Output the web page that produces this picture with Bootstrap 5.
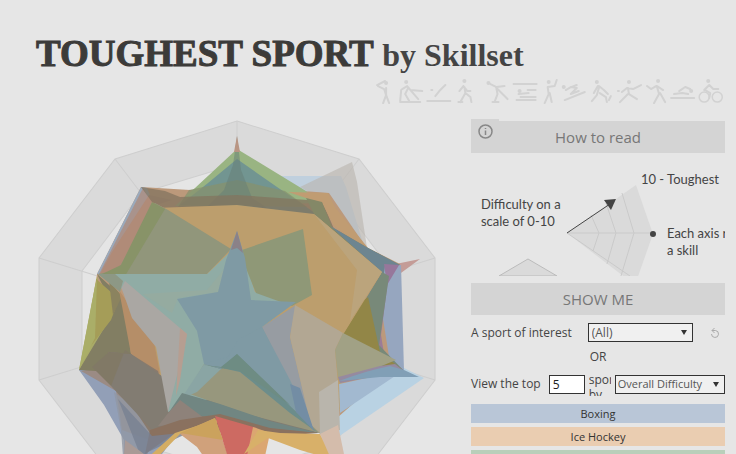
<!DOCTYPE html>
<html lang="en">
<head>
<meta charset="utf-8">
<meta name="viewport" content="width=device-width, initial-scale=1">
<title>Toughest Sport by Skillset</title>
<link href="https://cdn.jsdelivr.net/npm/bootstrap@5.3.0/dist/css/bootstrap.min.css" rel="stylesheet">
<style>
body{background:#e6e6e6;color:#444;font-family:"Open Sans","Noto Sans",sans-serif;font-size:12px;line-height:18px}
.page-head{padding:32px 11px 6px 36px}
.title{font-family:"Liberation Serif",serif;color:#3c3b39;font-size:37px;line-height:43px;font-weight:700;white-space:nowrap}
.title .stencil{-webkit-text-stroke:1px #3c3b39}
.title small{font-size:32px;font-weight:700;color:#444}
.sports{display:block;width:51%;height:auto}
.chart-col{flex:0 0 64%}
.side{padding:11px 11px 0 0;min-width:0}
.bar-title{background:#d4d4d4;color:#777;font-size:15px;font-weight:400;line-height:32px}
.info{top:-2px;left:0;width:28px;height:24px;background:#d4d4d4;border:0}
.guide{display:block;width:100%;height:auto;margin-bottom:7px}
.guide text{font-family:Lato,"Open Sans",sans-serif;font-size:13px;fill:#444}
.field{border:1px solid #333;background:#f0f0f0;color:#555;border-radius:0;height:19px;padding:0 3px;line-height:16px;min-width:0;appearance:none}
select.field{background-image:url("data:image/svg+xml,%3Csvg xmlns='http://www.w3.org/2000/svg' viewBox='0 0 6 5'%3E%3Cpath d='M0 0h6L3 5z' fill='%23333'/%3E%3C/svg%3E");background-repeat:no-repeat;background-size:6px 5px;background-position:right 5px center;font-size:12px}
select.metric{font-size:11px;padding:0 2px}
.num{width:36px;background:#fff;color:#222}
.either{margin:6px 0}
.cut{width:22px;height:24px;line-height:15px;overflow:hidden}
.pick{border:0;height:19px;line-height:19px;font-size:11px;color:#333;padding:0}
.c1{background:#b9c6d7}.c2{background:#eacdb1}.c3{background:#b9cfba}
</style>
</head>
<body>
<div class="vh-100 overflow-hidden">
<header class="page-head">
  <h1 class="title m-0"><span class="stencil">TOUGHEST SPORT</span> <small>by Skillset</small></h1>
  <svg class="sports ms-auto" viewBox="376 77 350 27" fill="none" stroke="#d2d2d2" stroke-width="2" stroke-linecap="round" stroke-linejoin="round" aria-hidden="true">
    <path d="M379 85l8-4M380 86l6 3 2 6-3 8M388 88v7l3 8"/><circle cx="388" cy="83" r="1" />
    <path d="M404 89l5-3 5 6 6 7M410 88l-3 6 4 7M402 102h20M403 90l-1 11M412 90l12 1"/><circle cx="408" cy="82" r="1"/>
    <path d="M429 101h23M437 96l4-5 6-6M433 90h1"/>
    <path d="M465 86l-4 5M465 86l4 5h3M466 87l1 6-5 9M467 93l5 4 1 5M460 102h4"/><circle cx="466" cy="81" r="1"/>
    <path d="M492 84l6 3 8-1M497 87l8 8 4 4M498 89l1 5-3 8M494 102h6"/><circle cx="490" cy="83" r="1"/>
    <path d="M515 84h23M518 100h19M520 94l10-1M522 97h15M529 90h8"/><circle cx="521" cy="91" r="1"/>
    <path d="M549 87l7-1 2-6M549 87l1 7-4 9M551 93l2 9"/><circle cx="550" cy="82" r="1"/>
    <path d="M567 90l5-3 6 1-6 6 8-3M566 100l20-8M578 85l-5 2"/><circle cx="565" cy="87" r="1"/>
    <path d="M599 86l-4 7M600 86l5 4 4 4M600 88l-2 7-5 6M601 93l6 4 1 5M612 96l-2 4"/><circle cx="598" cy="82" r="1"/>
    <path d="M623 92l5-4 6 1 8-4M629 88l1 6 8 5M629 94l-8 8M619 91h1"/><circle cx="630" cy="82" r="1"/>
    <path d="M657 86l-5 3-4-3M658 86l6 4M658 87l2 7-5 9M661 93l5 9"/><circle cx="659" cy="81" r="1"/>
    <path d="M672 98h23M675 94l8-1 6 1M680 91l6-4 5 2"/><circle cx="692" cy="91" r="1"/>
    <circle cx="705" cy="97" r="5" stroke-width="1.5"/><circle cx="718" cy="97" r="5" stroke-width="1.5"/><path d="M705 90l5-5 4 4h5M706 90l5 3-1 5"/><circle cx="709" cy="81" r="1"/>
  </svg>
</header>
<main class="d-flex align-items-start">
  <div class="chart-col">
  <svg class="d-block w-100" viewBox="0 110 471 414" role="img" aria-label="Radar chart of sports by skill">
    <path d="M237 121L359 159 435 258V380L359 479 237 517 115 479 39 380V258L115 159Z" fill="#dadada" stroke="#cecece"/>
    <path d="M237 164L333 193 392 271V367L333 445 237 474 141 445 82 367V271L141 193Z" fill="#e5e5e5" stroke="#cfcfcf"/>
    <path d="M237 121V319M359 159L237 319M435 258L237 319M435 380L237 319M39 380L237 319M39 258L237 319M115 159L237 319" stroke="#cecece" fill="none"/>
    <!-- outermost shapes -->
    <path d="M270 176H341L346 187 368 260 350 270 300 220Z" fill="#c0d0de"/>
    <path d="M300 187L352 162 357 182 367 248 340 210Z" fill="#b9b4ae" opacity=".6"/>
    <path d="M386 266L420 259 390 281Z" fill="#c49c97"/>
    <path d="M404 368L424 378 335 439 320 430 330 380Z" fill="#b9d2e3"/>
    <path d="M97 274L84 350 96 360 130 290Z" fill="#dfb995"/>
    <path d="M97 276L79 370 110 390 130 300Z" fill="#a9ab68"/>
    <path d="M79 370L104 405 124 440 124 470H150L180 430 160 370Z" fill="#929fb7"/>
    <path d="M81 371L116 391 122 430 150 440 170 400 140 360Z" fill="#9b8b84"/>
    <path d="M114 392L138 410 152 436 144 470H124L121 430Z" fill="#9197a4" opacity=".8"/>
    <!-- body -->
    <path d="M141 187L190 190 237 188 290 190 329 193 366 247 400 264 398 364 320 433 170 432 110 370 97 274Z" fill="#bc997b"/>
    <path d="M141 187L97 274H103L152 200 147 188Z" fill="#9aaabd"/>
    <path d="M143 188L152 203 126 258 103 274H99Z" fill="#a9938c"/>
    <path d="M149 195L172 200 153 206 118 274H100L112 252Z" fill="#b08b78"/>
    <path d="M237 149L306 191 316 203 237 206 175 206 195 188Z" fill="#99b482"/>
    <path d="M237 159L277 187 321 217 237 208 180 205 208 183Z" fill="#729591"/>
    <path d="M189 190L237 180 285 191 307 207 237 206 178 207Z" fill="#87926e" opacity=".75"/>
    <path d="M237 136L241 170 252 198 270 210H204L224 190 233 165Z" fill="#667e76" opacity=".5"/>
    <path d="M237 136L240 152H234Z" fill="#b99583"/>
    <path d="M141 187L165 191 180 197 237 195 322 201 334 229 314 215 237 205 168 210 152 202Z" fill="#83745f" opacity=".75"/>
    <path d="M288 192L328 193 335 207 368 248 353 240 334 226 322 203 306 198Z" fill="#c09c72"/>
    <path d="M306 198L322 202 332 227 368 248 400 265 382 273 314 214Z" fill="#848867"/>
    <path d="M330 226L368 248 400 265 386 280 375 266Z" fill="#6d8590"/>
    <path d="M385 266L401 265 404 372 390 363 380 300Z" fill="#96a6bf"/>
    <path d="M384 264L399 265 387 285Z" fill="#97779b"/>
    <path d="M388 280L381 335 384 354 404 372 378 363 375 330Z" fill="#9b7c98"/>
    <path d="M382 272L389 276 379 345 404 371 365 365 345 333Z" fill="#788979"/>
    <path d="M364 300L368 297 380 352 404 371 373 363 343 334Z" fill="#928647"/>
    <!-- central fills -->
    <path d="M155 208L237 205 314 214 382 272 344 333 340 410 320 430 170 412 121 280Z" fill="#bc9e6d"/>
    <path d="M314 214L382 272 362 303 350 321 357 270Z" fill="#bba47c"/>
    <path d="M155 203L168 210 231 249 207 274 98 274 118 270Z" fill="#91967b"/>
    <path d="M152 202L165 209 125 276 100 275 121 265Z" fill="#889368"/>
    <path d="M97 274L120 295 125 303 131 354 150 372 112 372 79 370 115 310Z" fill="#827e63"/>
    <path d="M96 279L119 299 111 320 87 351 95 310Z" fill="#a59d58"/>
    <path d="M95 286L97 279 95 338 79 370Z" fill="#aaae68"/>
    <path d="M109 281L122 296 113 315Z" fill="#8b835f"/>
    <path d="M119 290L154 342 160 374 131 354Z" fill="#b58e68"/>
    <path d="M131 354L158 371 169 412 187 393 250 410 320 433 230 430 152 436 109 371 108 352Z" fill="#897b6e"/>
    <path d="M131 354L187 394 250 412 320 433 220 414 152 430 111 386 110 352Z" fill="#827c72"/>
    <path d="M109 352L131 354 125 350 111 386 92 367Z" fill="#817966"/>
    <path d="M116 274L126 280 187 333 184 370 176 400 168 412 156 347 132 318 124 295Z" fill="#aaa7a3"/>
    <path d="M98 274H207L231 251 237 250 245 260 255 292 295 302 262 327 312 428 230 392 168 412 187 334 125 281 120 291Z" fill="#90aca5"/>
    <path d="M180 328L187 334 180 380 176 396Z" fill="#b69e91"/>
    <path d="M98 274H115L123 281 120 292Z" fill="#8d9885"/>
    <path d="M178 298L219 292 225 268 207 290 143 294 172 313Z" fill="#95aba0"/>
    <path d="M239 251L303 229 312 295 292 306 256 293Z" fill="#8f9877"/>
    <path d="M262 327L296 305 290 337 312 428Z" fill="#979ca2"/>
    <path d="M295 305L343 333 335 350 338 384 323 435 312 430 290 337Z" fill="#b2a793"/>
    <path d="M319 392L338 380 340 430 320 435Z" fill="#b9b5ac"/>
    <path d="M343 333L396 360 379 367 338 377 335 350Z" fill="#a1a185"/>
    <path d="M338 377L380 366 395 364 404 371 340 383Z" fill="#958aa0"/>
    <path d="M339 384L404 370 340 413Z" fill="#a2b9d0"/>
    <path d="M339 381Q365 371 390 366L404 370 419 377 380 377 350 380Z" fill="#819fb6"/>
    <!-- lower centre -->
    <path d="M187 393L204 364 237 366 300 415 320 433 250 415Z" fill="#97977d"/>
    <path d="M181 399L204 364 221 369 197 392Z" fill="#8aa5a4"/>
    <path d="M169 412L182 393 220 404 270 421 318 433 250 427 210 417Z" fill="#718682"/>
    <path d="M169 412L180 400 204 418 180 425 158 426Z" fill="#8e827a"/>
    <path d="M150 430L180 420 220 414 270 428 318 433 280 436 215 427 175 433 145 454Z" fill="#8a715f"/>
    <path d="M118 399L152 436 190 432 148 452 143 462Z" fill="#788192" opacity=".8"/>
    <path d="M237 231L226 260 218 292 177 299 197 331 204 364 221 369 238 354 312 428 262 327 296 302 251 300 245 258Z" fill="#7f9aa4"/>
    <path d="M237 231L231 250 237 248 243 253Z" fill="#8b8188"/>
    <path d="M237 354L318 433 290 413 240 372 204 364 221 369Z" fill="#6c8d8b"/>
    <path d="M262 327L290 380 313 428 237 354 204 364 221 369 238 340Z" fill="#7f9aa4"/>
    <path d="M237 354L290 405 240 371 204 365 221 367Z" fill="#6e8c83"/>
    <path d="M290 384L300 388 314 431 296 412Z" fill="#738da4"/>
    <path d="M143 462L175 433 215 420 226 420 180 434 153 462Z" fill="#d4ad63"/>
    <path d="M180 434L215 418 233 470H213L197 447Z" fill="#d0a17b"/>
    <path d="M215 416L257 428 244 470H232Z" fill="#cd6a62"/>
    <path d="M253 427L270 433 262 470H244Z" fill="#dba671"/>
    <path d="M180 433L215 418 223 440Z" fill="#cba25d"/>
    <path d="M244 454L258 430 280 433 320 434 334 460 300 450 268 438Z" fill="#d8b069"/>
    <path d="M320 434L338 425 345 459H331Z" fill="#d4bcab"/>
    <path d="M125 440L144 454 143 470H123Z" fill="#a99a96"/>
  </svg>
  </div>
  <aside class="side flex-grow-1">
    <div class="position-relative">
      <h2 class="bar-title text-center m-0">How to read</h2>
      <button class="info position-absolute p-0" type="button" aria-label="Information"><svg class="d-block mx-auto" width="15" height="15" viewBox="0 0 30 30" fill="none" stroke="#888" stroke-width="3"><circle cx="15" cy="15" r="13"/><path d="M15 13v9M15 8v2"/></svg></button>
    </div>
    <svg class="guide" viewBox="471 153 254 123" role="img" aria-label="How to read the radar chart">
      <path d="M567 233L636 185 653 234 635 285Z" fill="#dadada"/>
      <path d="M567 233H653M591 215L599 233 593 251M606 203L616 233 607 264M622 193L634 233 621 276M567 233L630 276" stroke="#cacaca" fill="none"/>
      <path d="M567 233L610 204" stroke="#444"/><path d="M616 199L611 210 604 200Z" fill="#444"/>
      <circle cx="653" cy="234" r="3" fill="#444"/>
      <path d="M499 276L528 259 557 276Z" fill="#dadada" stroke="#bbb"/>
      <text x="641" y="184">10 - Toughest</text>
      <text x="481" y="209">Difficulty on a</text><text x="481" y="226">scale of 0-10</text>
      <text x="667" y="238">Each axis represents</text><text x="667" y="255">a skill</text>
    </svg>
    <h2 class="bar-title text-center m-0">SHOW ME</h2>
    <form>
      <div class="d-flex align-items-center mt-1 pt-1">
        <label for="sport" class="text-nowrap">A sport of interest</label>
        <select id="sport" class="field flex-grow-1 ms-3"><option>(All)</option></select>
        <button class="btn border-0 p-0 ms-3 me-1 d-flex" type="button" aria-label="Reset"><svg width="12" height="12" viewBox="0 0 24 24" fill="none" stroke="#aaa" stroke-width="2"><path d="M6 7H13A7 7 0 1 1 5 14M11 2L6 7 11 12"/></svg></button>
      </div>
      <div class="text-center either">OR</div>
      <div class="d-flex align-items-center">
        <label for="count" class="text-nowrap">View the top</label>
        <input id="count" class="field num ms-2" value="5">
        <span class="cut mx-1">sports by</span>
        <select class="field metric flex-grow-1" aria-label="Ranking skill"><option>Overall Difficulty</option></select>
      </div>
      <div class="d-grid gap-1 mt-2">
        <button class="pick c1" type="button">Boxing</button>
        <button class="pick c2" type="button">Ice Hockey</button>
        <button class="pick c3" type="button" aria-label="Football"></button>
      </div>
    </form>
  </aside>
</main>
</div>
<script src="https://cdn.jsdelivr.net/npm/bootstrap@5.3.0/dist/js/bootstrap.bundle.min.js"></script>
</body>
</html>
